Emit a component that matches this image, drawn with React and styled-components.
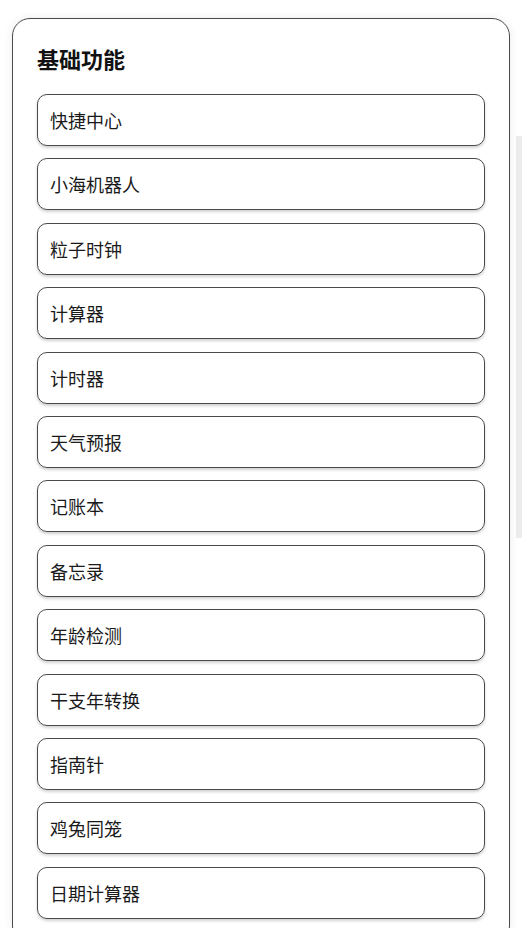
import React from 'react';
import styled, { createGlobalStyle } from 'styled-components';

const GlobalStyle = createGlobalStyle`
  html, body {
    margin: 0;
    background: #fff;
    font-family: 'Noto Sans CJK SC', 'Noto Sans', sans-serif;
    color: #111;
  }
`;

const Page = styled.div`
  position: relative;
  padding: 18px 12px 24px;
`;

const ScrollStrip = styled.div`
  position: absolute;
  top: 136px;
  right: 0;
  width: 6px;
  height: 402px;
  background: #ececec;
`;

const Card = styled.section`
  width: 498px;
  box-sizing: border-box;
  border: 1px solid #4a4a4a;
  border-radius: 18px;
  background: #fff;
  box-shadow: 0 0 10px rgba(0, 0, 0, 0.08);
  padding: 23px 24px 24px;
`;

const Title = styled.h2`
  margin: 0 0 20px;
  font-size: 22px;
  line-height: 32px;
  font-weight: 700;
  color: #111;
`;

const List = styled.div`
  display: flex;
  flex-direction: column;
  gap: 12.4px;
`;

const Item = styled.div`
  height: 52px;
  box-sizing: border-box;
  display: flex;
  align-items: center;
  padding: 0 12px;
  border: 1px solid #4a4a4a;
  border-radius: 10px;
  box-shadow: 0 2px 3px rgba(0, 0, 0, 0.18);
  font-size: 18px;
  color: #1a1a1a;
`;

const items = [
  '快捷中心',
  '小海机器人',
  '粒子时钟',
  '计算器',
  '计时器',
  '天气预报',
  '记账本',
  '备忘录',
  '年龄检测',
  '干支年转换',
  '指南针',
  '鸡兔同笼',
  '日期计算器',
];

const App = () => (
  <Page>
    <GlobalStyle />
    <ScrollStrip />
    <Card>
      <Title>基础功能</Title>
      <List>
        {items.map((name) => (
          <Item key={name}>{name}</Item>
        ))}
      </List>
    </Card>
  </Page>
);

export default App;
